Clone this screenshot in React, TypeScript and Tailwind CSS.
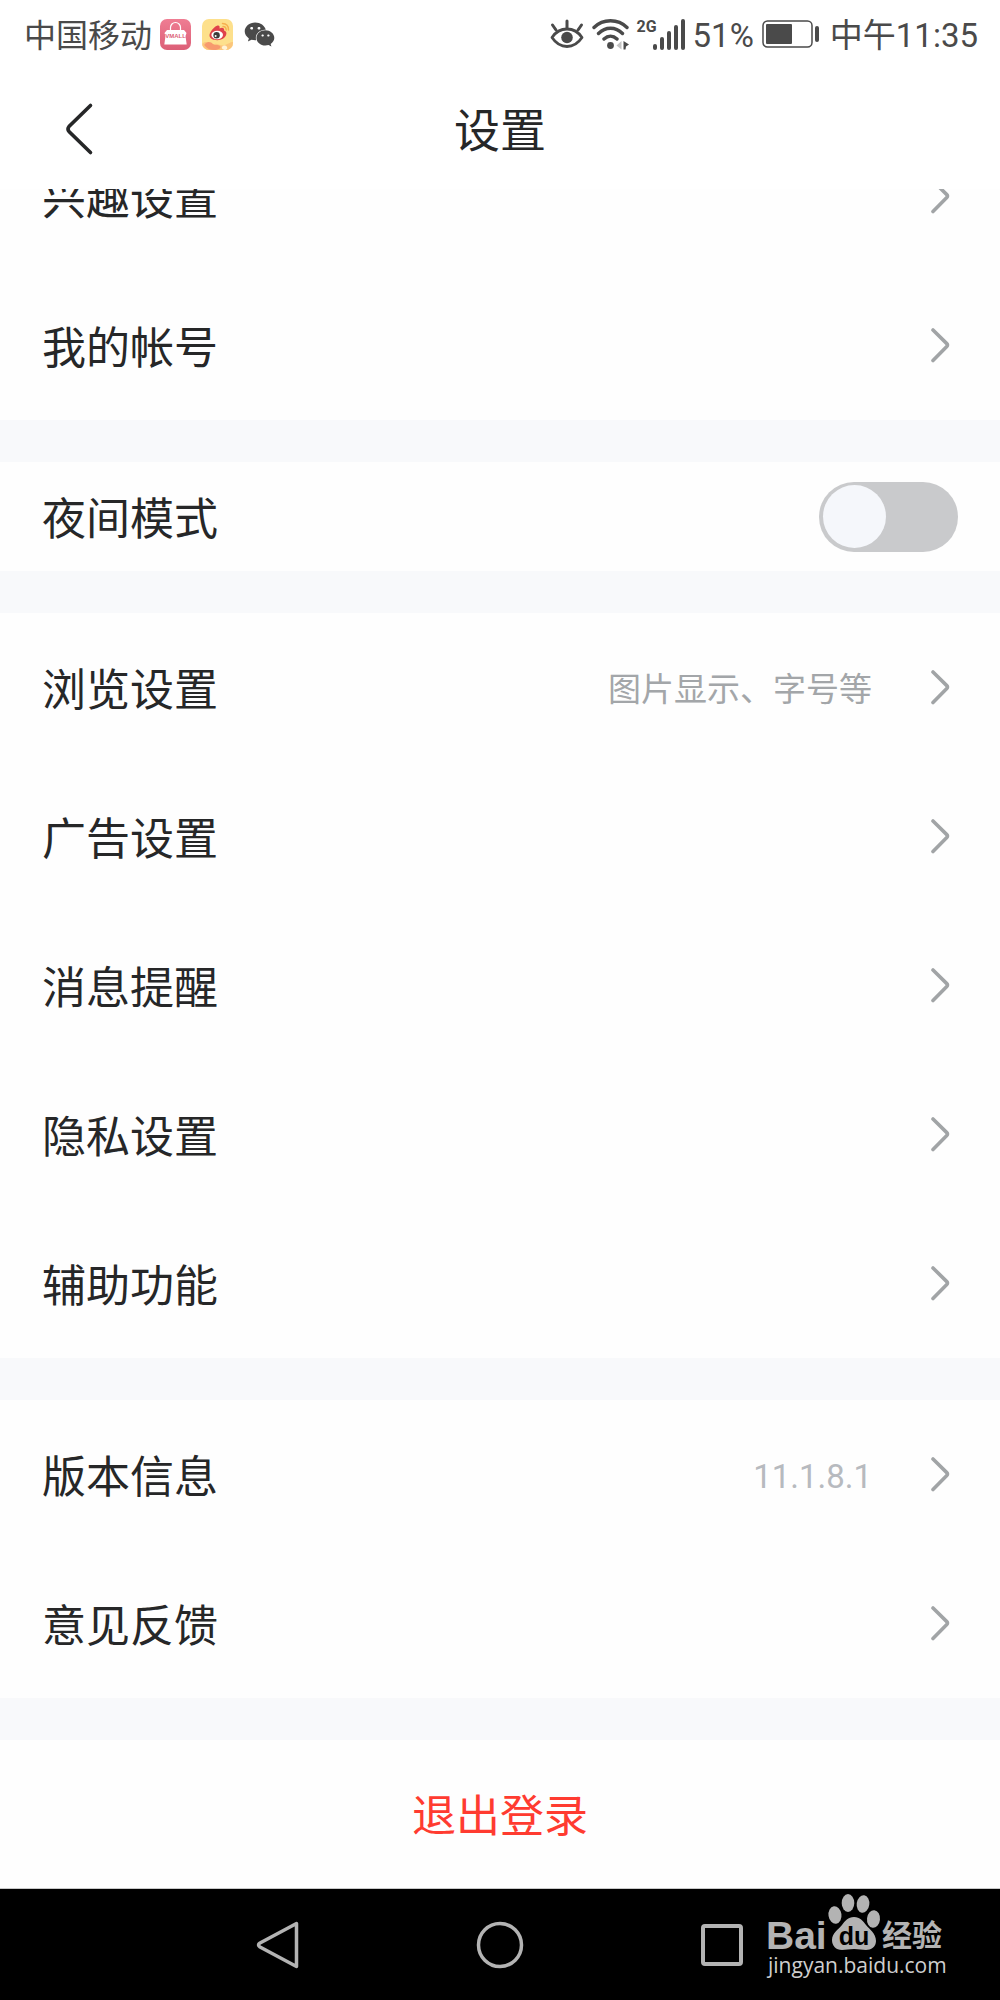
import { useState } from 'react';
import { FaWeixin } from 'react-icons/fa';

interface SettingItem {
  label: string;
  value?: string;
  valueClass?: string;
}

const ACCOUNT_ITEMS: SettingItem[] = [{ label: '兴趣设置' }, { label: '我的帐号' }];

const GENERAL_ITEMS: SettingItem[] = [
  { label: '浏览设置', value: '图片显示、字号等', valueClass: 'text-[#a3a6a9]' },
  { label: '广告设置' },
  { label: '消息提醒' },
  { label: '隐私设置' },
  { label: '辅助功能' },
];

const ABOUT_ITEMS: SettingItem[] = [
  { label: '版本信息', value: '11.1.8.1', valueClass: 'text-[#b7babf]' },
  { label: '意见反馈' },
];

function VmallIcon() {
  return (
    <svg width="31" height="31" viewBox="0 0 31 31" aria-hidden="true">
      <defs>
        <linearGradient id="vmall" x1="0" y1="0" x2="0" y2="1">
          <stop offset="0" stopColor="#ef7d93" />
          <stop offset="1" stopColor="#dc5f77" />
        </linearGradient>
      </defs>
      <rect width="31" height="31" rx="7" fill="url(#vmall)" />
      <path d="M10.5 13V8.5a5 5 0 0 1 10 0V13" fill="none" stroke="#fff" strokeWidth="1.2" />
      <path d="M4.5 14L7 11h17l2.500 3-1 3 1.200 8.500H4.300L5.500 17z" fill="#fff" />
      <text x="15.5" y="19" textAnchor="middle" fontSize="6" fontWeight="700" fontFamily="Liberation Sans, sans-serif" fill="#dc5f77">
        VMALL
      </text>
    </svg>
  );
}

function WeiboIcon() {
  return (
    <svg width="31" height="31" viewBox="0 0 31 31" aria-hidden="true">
      <defs>
        <clipPath id="weibo-tile">
          <rect width="31" height="31" rx="7" />
        </clipPath>
      </defs>
      <g clipPath="url(#weibo-tile)">
        <rect width="31" height="31" fill="#fde08c" />
        <path d="M0 25c3-3 6-2 8 0s4-1 7 0 5 2 8 1 5-3 8-3v8H0z" fill="#fbc67c" />
        <path d="M3 25c3-3 6-2 8 0s5 0 7 2-2 4-6 4-6-1-8-3-2-2-1-3z" fill="#f79a6e" />
        <path d="M20 28c1-2 4-2 5 0s-1 3-2 3-4-1-3-3z" fill="#fff3d6" />
      </g>
      <path
        d="M7.500 16.500c0-3.500 4.500-8.500 7.500-9.700 2.200-.8 3 .5 2.500 2.700 2.500-1.200 5.200-.8 4.600 2 2.200.8 2.800 2.400 2 4.500-1 3-4.600 5.200-8.800 5.200s-7.800-1.700-7.800-4.700z"
        fill="#e0424b"
      />
      <ellipse cx="15.200" cy="16" rx="5.800" ry="4.200" fill="#fff" />
      <circle cx="14.600" cy="16.300" r="3.200" fill="#3d3a3a" />
      <circle cx="13.600" cy="17" r="1" fill="#fff" />
      <path d="M21 7.500c2 0 3.200 1.200 3.200 3.500M20.500 4.500c4 0 6.200 2.500 6 6.500" fill="none" stroke="#f6b04f" strokeWidth="1.500" strokeLinecap="round" />
    </svg>
  );
}

function EyeIcon() {
  return (
    <svg width="34" height="31" viewBox="0 0 34 31" fill="none" stroke="currentColor" strokeLinecap="round" aria-hidden="true">
      <path d="M2 18.500C6 12.500 11 10 17 10s11 2.500 15 8.500c-4 6-9 9-15 9s-11-3-15-9z" strokeWidth="2.800" strokeLinejoin="round" />
      <path d="M17 9V2M6 11L2.500 6M28 11l3.500-5" strokeWidth="3" />
      <circle cx="17" cy="18.500" r="5.800" fill="currentColor" stroke="none" />
    </svg>
  );
}

function WifiIcon() {
  return (
    <svg width="37" height="32" viewBox="0 0 37 32" fill="none" stroke="currentColor" strokeWidth="3.400" strokeLinecap="round" aria-hidden="true">
      <path d="M2 9.500c9-9 24-9 33 0M6.500 15.500c7-7 17-7 24 0M12 21c4-3.800 9-3.800 13 0" />
      <circle cx="18.500" cy="27.500" r="3.400" fill="currentColor" stroke="none" />
      <path d="M29.500 23v8.500l-5-4z" fill="#c4c4c4" stroke="none" />
      <path d="M31.500 23l5.500 3.500-3 2-.5 3h-2z" fill="currentColor" stroke="none" />
    </svg>
  );
}

function SignalIcon() {
  return (
    <svg width="48" height="31" viewBox="0 0 48 31" fill="currentColor" aria-hidden="true">
      <rect x="16" y="25" width="4" height="6" rx="2" />
      <rect x="23" y="18" width="4" height="13" rx="2" />
      <rect x="30" y="12" width="4" height="19" rx="2" />
      <rect x="37" y="6" width="4" height="25" rx="2" />
      <rect x="44" y="0" width="4" height="31" rx="2" />
    </svg>
  );
}

function BatteryIcon() {
  return (
    <svg width="58" height="28" viewBox="0 0 58 28" fill="currentColor" aria-hidden="true">
      <rect x="1" y="1" width="49" height="26" rx="4.500" fill="none" stroke="currentColor" strokeWidth="1.500" />
      <rect x="4" y="4" width="26" height="20" rx="1" />
      <rect x="53" y="6" width="4" height="16" rx="2" />
    </svg>
  );
}

function StatusBar() {
  return (
    <div className="flex h-[68px] items-center justify-between bg-white pr-[22px] pl-6 text-[33px] leading-10 text-[#4a4a4a]">
      <div className="flex items-center">
        <span className="mr-2 pt-1 text-[32px]">中国移动</span>
        <div className="flex items-center gap-[11px]">
          <VmallIcon />
          <WeiboIcon />
          <FaWeixin size={31} aria-hidden="true" />
        </div>
      </div>
      <div className="flex items-center">
        <EyeIcon />
        <span className="ml-2">
          <WifiIcon />
        </span>
        <span className="relative ml-2">
          <SignalIcon />
          <span className="absolute -top-0.5 left-0 text-[16px] leading-5 font-bold">2G</span>
        </span>
        <span className="ml-2 pt-1">51%</span>
        <span className="mr-2.5 ml-2">
          <BatteryIcon />
        </span>
        <span className="pt-1">中午11:35</span>
      </div>
    </div>
  );
}

function SettingRow({ label, value, valueClass }: SettingItem) {
  return (
    <li>
      <a href="#" className="flex h-[149px] items-center px-[42px]">
        <span className="pt-1.5 text-[44px] leading-[52px]">{label}</span>
        <span className={`ml-auto pt-1 text-[33px] leading-10 ${valueClass ?? ''}`}>{value}</span>
        <svg className="mr-2 ml-[58px] shrink-0" width="20" height="36" viewBox="0 0 20 36" fill="none" aria-hidden="true">
          <path d="M3 2L16.800 15.600q1.400 1.400 0 2.800L3 32.500" stroke="#a1a4a6" strokeWidth="3.600" strokeLinecap="round" />
        </svg>
      </a>
    </li>
  );
}

function SettingGroup({ items }: { items: SettingItem[] }) {
  return (
    <ul className="bg-[#fefefe]">
      {items.map((item) => (
        <SettingRow key={item.label} {...item} />
      ))}
    </ul>
  );
}

function Watermark() {
  return (
    <svg className="absolute top-0 right-[50px]" width="186" height="100" viewBox="0 0 186 100" fill="#b3b3b3" aria-label="Baidu经验">
      <text x="2" y="60" fontSize="39" fontWeight="700" fontFamily="Liberation Sans, sans-serif">
        Bai
      </text>
      <ellipse cx="71" cy="26" rx="6.500" ry="8.800" transform="rotate(-8 71 26)" />
      <ellipse cx="84" cy="14" rx="6.300" ry="9" />
      <ellipse cx="99" cy="15" rx="6.300" ry="8.800" transform="rotate(8 99 15)" />
      <ellipse cx="109.500" cy="30" rx="6.500" ry="8.800" transform="rotate(6 109.500 30)" />
      <path d="M90 28c6 0 9 4 12 8s10 8 10 16c0 6-5 9-10 9-4 0-7-1-12-1s-8 1-12 1c-6 0-10-4-10-10 0-7 6-10 10-15 3-4 6-8 12-8z" />
      <text x="90" y="56" textAnchor="middle" fontSize="25" fontWeight="700" fontFamily="Liberation Sans, sans-serif" fill="#000">
        du
      </text>
      <text x="118" y="57" fontSize="30" fontWeight="700" fontFamily="Noto Sans CJK SC, sans-serif">
        经验
      </text>
      <text x="4" y="84" fontSize="21" fontFamily="Open Sans, sans-serif" fill="#cfcfcf">
        jingyan.baidu.com
      </text>
    </svg>
  );
}

function NavBar() {
  return (
    <nav className="relative flex h-28 items-center justify-center gap-[174px] border-t border-[#c8c8c8] bg-black">
      <button type="button" aria-label="返回">
        <svg width="48" height="48" viewBox="0 0 48 48" fill="none" stroke="#b3b3b3" strokeWidth="3.500" strokeLinejoin="round">
          <path d="M42.500 2.500v43L6 26q-3-2 0-4z" />
        </svg>
      </button>
      <button type="button" aria-label="主屏幕">
        <svg width="48" height="48" viewBox="0 0 48 48" fill="none" stroke="#b3b3b3" strokeWidth="3.500">
          <circle cx="24" cy="24" r="21.500" />
        </svg>
      </button>
      <button type="button" aria-label="最近任务">
        <svg width="48" height="48" viewBox="0 0 48 48" fill="none" stroke="#b3b3b3" strokeWidth="4">
          <rect x="5" y="5" width="38" height="38" rx="2" />
        </svg>
      </button>
      <Watermark />
    </nav>
  );
}

export default function App() {
  const [nightMode, setNightMode] = useState(false);

  return (
    <div className="flex min-h-screen flex-col bg-[#f8f9fb] font-[Roboto,'Noto_Sans_CJK_SC',sans-serif] text-[#262728]">
      <StatusBar />
      <header className="grid h-[121px] grid-cols-[1fr_auto_1fr] items-center bg-white px-[60px]">
        <button type="button" aria-label="返回" className="justify-self-start">
          <svg width="36" height="54" viewBox="0 0 36 54" fill="none">
            <path d="M30.500 3.500L9 24.500q-2 2.500 0 5L30.500 50.500" stroke="#262728" strokeWidth="3.600" strokeLinecap="round" />
          </svg>
        </button>
        <h1 className="pt-1 text-[46px] leading-[56px]">设置</h1>
      </header>

      <main className="flex flex-1 flex-col overflow-hidden">
        {/* list is scrolled a little, so the first row is cut by the header */}
        <div className="-mt-[67px] flex flex-col gap-[42px]">
          <SettingGroup items={ACCOUNT_ITEMS} />

          <label className="flex h-[109px] items-center justify-between bg-[#fefefe] px-[42px]">
            <span className="pt-1.5 text-[44px] leading-[52px]">夜间模式</span>
            <input
              type="checkbox"
              role="switch"
              checked={nightMode}
              onChange={(e) => setNightMode(e.target.checked)}
              className="flex h-[70px] w-[139px] cursor-pointer appearance-none items-center rounded-full bg-[#c9cacc] px-1 transition-colors before:size-[63px] before:rounded-full before:bg-[#f5f7fb] before:content-[''] checked:justify-end checked:bg-[#4e6ef2]"
            />
          </label>

          <SettingGroup items={GENERAL_ITEMS} />
          <SettingGroup items={ABOUT_ITEMS} />

          <button type="button" className="h-[148px] bg-[#fefefe] pt-1.5 text-[44px] leading-[52px] text-[#ff3b30]">
            退出登录
          </button>
        </div>
      </main>

      <NavBar />
    </div>
  );
}
